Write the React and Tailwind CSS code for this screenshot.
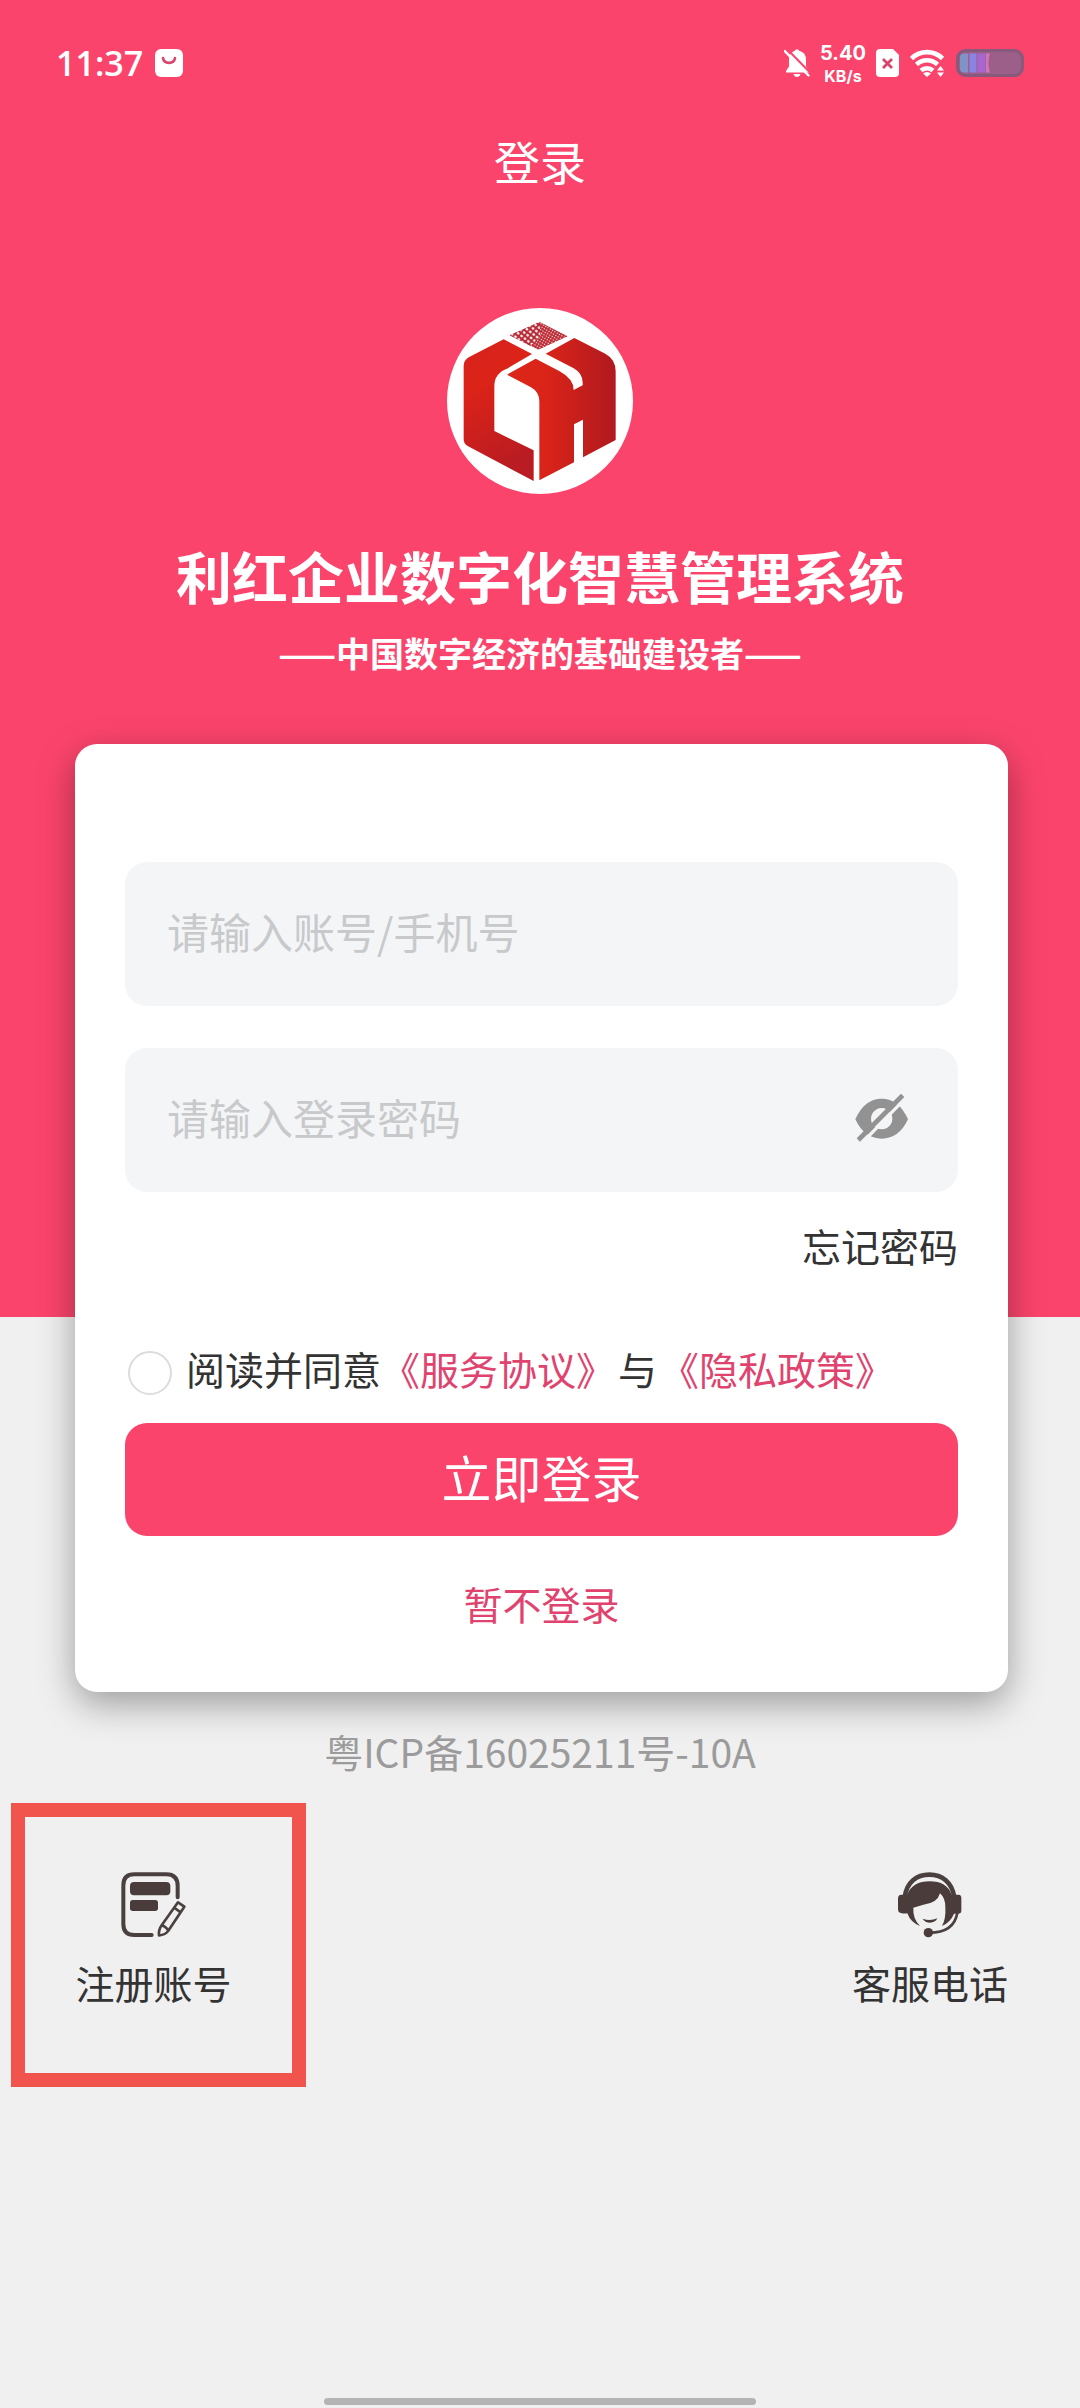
import React, { useState } from "react";

function StatusBar() {
  return (
    <div className="flex h-[126px] items-center justify-between px-14">
      <div className="flex items-center gap-3 text-white">
        <span className="font-['Open_Sans',sans-serif] text-[34px] leading-10 font-semibold">11:37</span>
        <svg width="28" height="28" viewBox="0 0 28 28" aria-hidden="true">
          <rect width="28" height="28" rx="6" fill="#fff" />
          <path d="M8 9c1 6.500 11 6.500 12 0" fill="none" stroke="#d8456c" strokeWidth="2.600" strokeLinecap="round" />
        </svg>
      </div>
      <div className="flex items-center text-white">
        <svg width="26" height="28" viewBox="0 0 26 28" aria-hidden="true">
          <path d="M13 0.500c1.500 0 2 .7 2.400 1.600C20 3.200 22 6.500 22 10.500v7l3 4.500v1.500H2V22l3-4.500v-7c0-4 2-7.300 5.600-8.400C11 1.200 11.500.5 13 .5zM9.500 25h7c-.5 2-2 3-3.500 3s-3-1-3.500-3z" fill="#fff" />
          <path d="M3.500 0.500 26 23.500" stroke="#fb446c" strokeWidth="2" />
          <path d="M0.800 2 24.500 26.500" stroke="#fff" strokeWidth="2.400" strokeLinecap="round" />
        </svg>
        <div className="ml-[10px] flex flex-col items-center font-['Inter',sans-serif] font-bold">
          <span className="text-[20px] leading-[25px]">5.40</span>
          <span className="text-[16px] leading-[20px]">KB/s</span>
        </div>
        <svg className="ml-[10px]" width="24" height="28" viewBox="0 0 24 28" aria-hidden="true">
          <path d="M4 0h13l6 6v18a4 4 0 0 1-4 4H4a4 4 0 0 1-4-4V4a4 4 0 0 1 4-4z" fill="#fff" />
          <path d="m7 10 9 9m0-9-9 9" stroke="#d8456c" strokeWidth="2.800" />
        </svg>
        <svg className="ml-[10px]" width="36" height="28" viewBox="0 0 36 28" aria-hidden="true">
          <g fill="none" stroke="#fff" strokeWidth="4.600">
            <path d="M1.500 9.500a22 22 0 0 1 31 0" />
            <path d="M6.500 15.500a15 15 0 0 1 21 0" />
            <path d="M11 21.500a9 9 0 0 1 12 0" />
          </g>
          <path d="M13 24.500q4-3 8 0l-4 3.500z" fill="#fff" />
          <path d="m30.500 17 3.500 4.500h-7zM30.500 28l3.500-4.500h-7z" fill="#fff" />
        </svg>
        <svg className="ml-[10px]" width="68" height="28" viewBox="0 0 68 28" aria-hidden="true">
          <rect x="1.500" y="1.500" width="65" height="25" rx="8" fill="#9c5f8a" stroke="#875a7c" strokeWidth="3" />
          <path d="M8 4.500h4v19H8a4 4 0 0 1-4-4v-11a4 4 0 0 1 4-4z" fill="#7f93c8" />
          <rect x="13.500" y="4.500" width="7" height="19" fill="#8a83e4" />
          <rect x="21.500" y="4.500" width="8" height="19" fill="#a866cf" />
          <path d="M34 4.500q-3 9 0 19h-4v-19z" fill="#cf77b4" />
        </svg>
      </div>
    </div>
  );
}

function Logo() {
  return (
    <svg className="mx-auto block" width="186" height="186" viewBox="0 0 558 558" role="img" aria-label="利红">
      <defs>
        <linearGradient id="left" x1="0" y1="0" x2="0.300" y2="1">
          <stop offset="0" stopColor="#d4231f" />
          <stop offset="0.350" stopColor="#dc2318" />
          <stop offset="1" stopColor="#b91c22" />
        </linearGradient>
        <linearGradient id="right" gradientUnits="userSpaceOnUse" x1="180" y1="0" x2="508" y2="0">
          <stop offset="0" stopColor="#dc2618" />
          <stop offset="0.350" stopColor="#da2419" />
          <stop offset="1" stopColor="#b0191f" />
        </linearGradient>
        <pattern id="mesh" width="13" height="13" patternUnits="userSpaceOnUse" patternTransform="rotate(38)">
          <rect width="13" height="13" fill="#b62a35" />
          <rect x="3" y="3" width="8" height="7" rx="2" fill="#fff" />
        </pattern>
        <pattern id="dots" width="8" height="8" patternUnits="userSpaceOnUse" patternTransform="rotate(30)">
          <rect width="8" height="8" fill="#bd2a34" />
          <circle cx="4" cy="4" r="2" fill="#fff" />
        </pattern>
      </defs>
      <circle cx="279" cy="279" r="279" fill="#fff" />
      <path d="m278 42 84 43-88 40-86-43z" fill="url(#dots)" />
      <path d="m278 42-90 40 62 31 30-30z" fill="url(#mesh)" />
      <path d="M170 94 255 138 180 182Q142 196 142 234V369L260 427V519L62 414Q50 408 50 394V174Q50 157 65 148z" fill="url(#left)" />
      <path d="M266 152 338 190Q380 213 380 246L407 232V224Q407 196 380 181L296 137 382 90 475 137Q506 154 506 190V396L408 448V335L381 349V463L277 517V280Q277 252 252 238L180 200z" fill="url(#right)" />
    </svg>
  );
}

function EyeOff() {
  return (
    <svg width="54" height="48" viewBox="0 0 162 144" aria-hidden="true">
      <path fillRule="evenodd" d="M1 76Q28 14 80 14 132 14 159 76 132 134 80 134 28 134 1 76zM80 42a32 32 0 1 0 .1 0z" fill="#929292" />
      <path d="M150 14 22 146" stroke="#f4f5f7" strokeWidth="10" />
      <path d="M143 4 10 138" stroke="#929292" strokeWidth="14" />
    </svg>
  );
}

function RegisterIcon() {
  return (
    <svg width="66" height="66" viewBox="0 0 198 198" aria-hidden="true">
      <g fill="none" stroke="#4b4040" strokeWidth="12" strokeLinecap="round" strokeLinejoin="round">
        <path d="M170 76V42Q170 7 136 7H40Q7 7 7 40V156Q7 189 40 189H92" />
        <path strokeWidth="8" d="m171 91 19 13-48 72Q134 189 114 190 112 174 122 160z M161 108l18 13M122 160q12 2 20 16" />
      </g>
      <rect x="27" y="30" width="121" height="40" rx="12" fill="#4b3c3c" />
      <rect x="27" y="84" width="84" height="33" rx="8" fill="#4b3c3c" />
    </svg>
  );
}

function ServiceIcon() {
  return (
    <svg width="64" height="66" viewBox="0 0 192 198" aria-hidden="true">
      <path d="M20 76C26 30 56 8 94 8s68 22 75 68" fill="none" stroke="#4b4040" strokeWidth="14" />
      <path d="M27 68Q44 28 95 28T161 68h20q9 0 9 10v38q0 9-10 9h-12Q158 150 132 162 144 142 142 105 142 78 126 64 118 94 76 98L46 107Q44 140 66 162 38 152 28 124 20 126 8 123 0 121 0 113V80q0-12 10-12z" fill="#4b3c3c" />
      <path d="M74 140q22 8 44-1-6 13-22 13-15 0-22-12z" fill="#4b3c3c" />
      <path d="M178 122Q168 182 94 182" fill="none" stroke="#4b4040" strokeWidth="8" />
      <circle cx="91" cy="182" r="14" fill="#4b3c3c" />
    </svg>
  );
}

const fieldClass =
  "block h-36 w-full rounded-[22px] bg-[#f4f5f7] pb-2 pl-[42px] text-[42px] text-[#333] outline-none placeholder:text-[#c8c9cb] placeholder:opacity-100";

export default function App() {
  const [visible, setVisible] = useState(false);
  return (
    <div className="flex min-h-screen flex-col bg-[linear-gradient(#fb446c_1317px,#f0f0f0_1317px)] font-['Noto_Sans_CJK_SC',sans-serif] text-[39px] leading-[58px] text-[#333]">
      <StatusBar />
      <header className="flex flex-col text-center text-white">
        <h1 className="text-[46px] leading-[68px]">登录</h1>
        <div className="mt-[114px]">
          <Logo />
        </div>
        <h2 className="mt-[41px] text-[56px] leading-[80px] font-bold">利红企业数字化智慧管理系统</h2>
        <p className="mt-[13px] text-[34px] leading-[50px] font-bold">——中国数字经济的基础建设者——</p>
      </header>

      <main className="mt-[66px] mr-[72px] ml-[75px] rounded-[22px] bg-white px-[50px] pt-[118px] pb-[60px] shadow-[0_12px_36px_rgba(0,0,0,0.35)]">
        <form onSubmit={(e) => e.preventDefault()}>
          <input aria-label="账号" placeholder="请输入账号/手机号" className={`${fieldClass} pr-10`} />
          <div className="relative mt-[42px]">
            <input
              type={visible ? "text" : "password"}
              aria-label="登录密码"
              placeholder="请输入登录密码"
              className={`${fieldClass} pr-32`}
            />
            <button
              type="button"
              aria-label="显示密码"
              onClick={() => setVisible(!visible)}
              className="absolute inset-y-0 right-[49px] flex items-center pb-1"
            >
              <EyeOff />
            </button>
          </div>
          <div className="mt-6 flex justify-end">
            <a href="#forgot">忘记密码</a>
          </div>
          <div className="mt-[65px] flex items-end">
            <input
              id="agree"
              type="checkbox"
              className="mr-[14px] mb-[2px] ml-[3px] size-[44px] shrink-0 appearance-none rounded-full border-2 border-[#dcdcdc] bg-white checked:bg-[#fb446c]"
            />
            <div className="whitespace-nowrap">
              <label htmlFor="agree">阅读并同意</label>
              <a href="#terms" className="text-[#e0436e]">《服务协议》</a>
              <span className="mx-[3px]">与</span>
              <a href="#privacy" className="text-[#e0436e]">《隐私政策》</a>
            </div>
          </div>
          <button type="submit" className="mt-[26px] block h-[113px] w-full rounded-[22px] bg-[#fb446c] pb-2 text-[50px] text-white">
            立即登录
          </button>
          <button type="button" className="mx-auto mt-[38px] block text-[#e0436e]">
            暂不登录
          </button>
        </form>
      </main>

      <p className="mt-[30px] text-center text-[#9b9b9b]">粤ICP备16025211号-10A</p>

      <nav className="mt-[23px] flex items-start justify-between pr-[72px] pl-[11px]">
        <a href="#register" className="flex h-[284px] w-[295px] flex-col items-center border-[14px] border-[#f0544c] pt-[55px] pr-[10px]">
          <RegisterIcon />
          <span className="mt-[15px]">注册账号</span>
        </a>
        <a href="#service" className="flex flex-col items-center pt-[69px]">
          <ServiceIcon />
          <span className="mt-[15px]">客服电话</span>
        </a>
      </nav>

      <div className="mx-auto mt-auto mb-[3px] h-[7px] w-2/5 rounded-full bg-[#b4b4b4]" />
    </div>
  );
}
